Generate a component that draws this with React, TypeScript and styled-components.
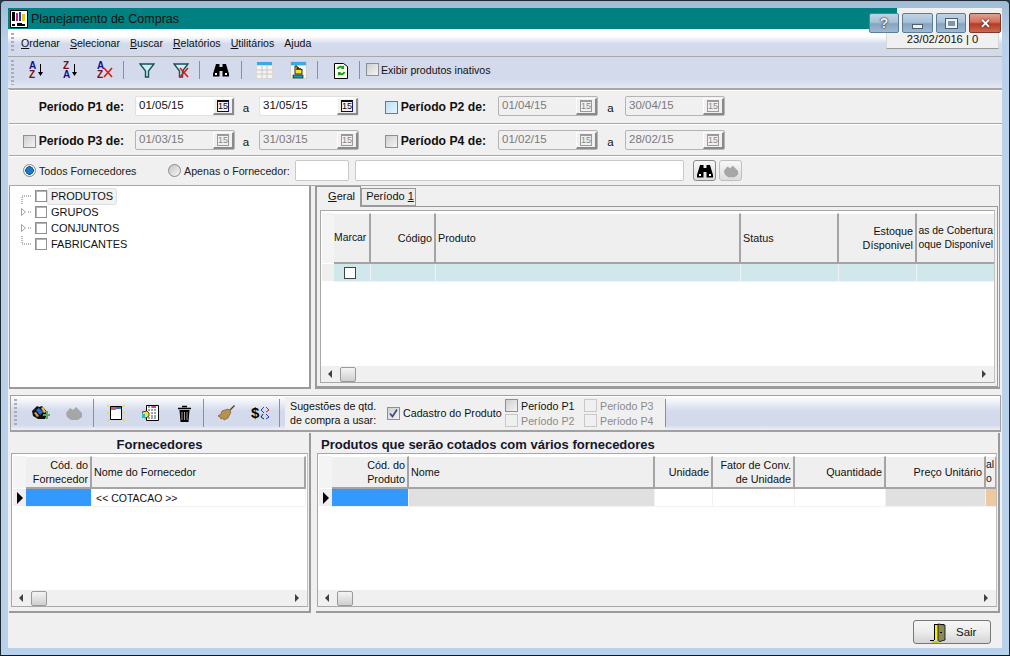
import React from 'react';
import styled, { createGlobalStyle } from 'styled-components';

const FONT = `"Liberation Sans", Arial, sans-serif`;

const GlobalStyle = createGlobalStyle`
  html, body { margin: 0; padding: 0; background: #2b3a44; }
  #root { width: 1010px; height: 656px; overflow: hidden; }
  * { box-sizing: border-box; }
`;

const Win = styled.div`
  position: relative;
  width: 1010px;
  height: 656px;
  padding: 8px 8px 8px 8px;
  background: linear-gradient(#9fbcd4 0, #b9d1ea 40px);
  border: 1px solid #1d2a33;
  border-bottom: 1px solid #0a1a20;
  border-radius: 5px 5px 0 0;
  font-family: ${FONT};
  font-size: 11px;
  color: #111;
  display: flex;
  flex-direction: column;
  margin: 0;
`;

const Inner = styled.div`
  margin: -1px;
  flex: 1;
  display: flex;
  flex-direction: column;
  background: #f0f0f0;
`;

const TitleBar = styled.div`
  height: 21px;
  background: #008080;
  display: flex;
  align-items: center;
  gap: 3px;
  padding-left: 2px;
  margin-right: 105px;
  color: #111;
  flex: none;
`;

const TitleText = styled.span`
  font-size: 12.5px;
`;

const Caption = styled.div`
  position: absolute;
  top: 12px;
  right: 8px;
  display: flex;
  gap: 3px;
`;

const CapBtn = styled.div<{ $red?: boolean; $w: number }>`
  width: ${(p) => p.$w}px;
  height: 20px;
  border: 1px solid ${(p) => (p.$red ? '#7a3a30' : '#5d7d96')};
  border-radius: 2px;
  background: ${(p) =>
    p.$red
      ? 'linear-gradient(#e0a090 0, #d2705c 45%, #b83a22 55%, #c86a50 100%)'
      : 'linear-gradient(#bfd3e4 0, #a8c2d8 45%, #84a4bf 55%, #9dbad2 100%)'};
  display: flex;
  align-items: center;
  justify-content: center;
`;

const CapHelp = styled.span`
  font-size: 14px;
  font-weight: bold;
  color: #e8eef4;
  text-shadow: 0 0 1px #223, 0 0 2px #223;
`;

const CapMin = styled.i`
  width: 11px;
  height: 5px;
  margin-top: 7px;
  background: #eef3f8;
  border: 1px solid #4a5f72;
`;

const CapMax = styled.i`
  width: 11px;
  height: 9px;
  border: 2px solid #eef3f8;
  background: #7f97ab;
  outline: 1px solid #4a5f72;
`;

const CapClose = styled.span`
  font-size: 13px;
  font-weight: bold;
  color: #fff;
  text-shadow: 0 0 1px #401010, 0 0 2px #401010;
`;

const MenuBar = styled.div`
  position: relative;
  height: 27px;
  flex: none;
  margin-top: 1px;
  background: linear-gradient(#ffffff 0, #ffffff 6px, #d3daec 14px, #d3daec 100%);
  border-bottom: 1px solid #a8a8a8;
  display: flex;
  align-items: center;
  padding-left: 13px;
  gap: 10px;
`;

const MenuItem = styled.span`
  font-size: 10.6px;
  u { text-decoration: underline; }
`;

const Grip = styled.i`
  position: absolute;
  left: 3px;
  top: 3px;
  bottom: 3px;
  width: 3px;
  background: repeating-linear-gradient(#a9adb8 0 2px, transparent 2px 4px);
`;

const DateBox = styled.div`
  position: absolute;
  right: 3px;
  top: 0;
  width: 113px;
  height: 19px;
  background: #f0f0f0;
  border: 1px solid #d8d8d8;
  border-bottom: 1px solid #9a9a9a;
  border-top: 0;
  font-size: 11.2px;
  display: flex;
  align-items: center;
  justify-content: center;
`;

const ToolBar = styled.div`
  position: relative;
  height: 32px;
  flex: none;
  background: linear-gradient(#d3daec 0, #d3daec 70%, #e4e8f3 100%);
  border-bottom: 1px solid #a8a8a8;
  display: flex;
  align-items: center;
  padding: 0 0 6px 12px;
`;

const ToolIcon = styled.span`
  width: 34px;
  height: 20px;
  flex: none;
  display: flex;
  align-items: center;
  justify-content: center;
`;

const Sep = styled.span<{ $l?: number; $r?: number; $h?: number }>`
  width: 1px;
  height: ${(p) => p.$h ?? 18}px;
  flex: none;
  background: #8c8f98;
  margin-left: ${(p) => p.$l ?? 0}px;
  margin-right: ${(p) => p.$r ?? 0}px;
`;

const Check = styled.span<{ $state?: 'off' | 'hover' | 'flat' | 'disabled' | 'plain'; $size?: number }>`
  width: ${(p) => p.$size ?? 13}px;
  height: ${(p) => p.$size ?? 13}px;
  flex: none;
  display: inline-flex;
  align-items: center;
  justify-content: center;
  border: 1px solid ${(p) => (p.$state === 'hover' ? '#3d87b8' : p.$state === 'disabled' ? '#c8c8c8' : p.$state === 'plain' ? '#444' : '#8e8f8f')};
  background: ${(p) =>
    p.$state === 'hover'
      ? 'linear-gradient(135deg,#bfe0f7,#e4f4fd)'
      : p.$state === 'disabled'
        ? '#f0f0f0'
        : p.$state === 'plain' || p.$state === 'flat'
          ? '#fff'
          : 'linear-gradient(135deg,#cfcfcf,#f4f4f4)'};
  box-shadow: ${(p) => (p.$state === 'flat' ? 'inset 1px 1px 0 #b4b4b4' : 'none')};
  color: #3b4f8c;
`;

const InactiveLabel = styled.span`
  font-size: 10.6px;
  margin-left: 2px;
`;

const PeriodRow = styled.div<{ $h: number }>`
  height: ${(p) => p.$h}px;
  flex: none;
  display: flex;
  align-items: center;
  border-top: 1px solid #a8a8a8;
  box-shadow: inset 0 1px 0 #fff;
  background: #f0f0f0;
  margin-left: 1px;
  padding: ${(p) => (p.$h > 32 ? '0 0 1px' : '1px 0 0')};
`;

const PeriodLabel = styled.div<{ $w: number; $r: number }>`
  width: ${(p) => p.$w}px;
  flex: none;
  display: flex;
  align-items: center;
  justify-content: flex-end;
  gap: 3px;
  padding-right: ${(p) => p.$r}px;
  font-weight: bold;
  font-size: 12.2px;
  padding-top: 2px;
  white-space: nowrap;
`;

const DateInput = styled.div<{ $active?: boolean }>`
  width: 100px;
  height: 20px;
  flex: none;
  background: ${(p) => (p.$active ? '#fff' : '#f0f0f0')};
  border: 1px solid ${(p) => (p.$active ? '#e0e0e0' : '#b4b4b4')};
  border-radius: 2px;
  display: flex;
  align-items: center;
  justify-content: space-between;
  padding: 0 0 2px 3px;
  font-size: 11.5px;
  color: ${(p) => (p.$active ? '#111' : '#7a7a7a')};
`;

const CalBtn = styled.span<{ $active?: boolean }>`
  width: 21px;
  height: 17px;
  margin-top: 2px;
  background: #f0f0f0;
  border-right: 2px solid #8a8a8a;
  border-bottom: 2px solid #8a8a8a;
  border-top: 1px solid #fff;
  border-left: 1px solid #fff;
  display: flex;
  align-items: center;
  justify-content: center;
  i {
    font-style: normal;
    font-size: 9px;
    line-height: 9px;
    width: 12px;
    text-align: center;
    border: 1px solid ${(p) => (p.$active ? '#101010' : '#9a9a9a')};
    border-top-width: 2px;
    border-right-color: ${(p) => (p.$active ? '#1a1a90' : '#9a9a9a')};
    color: ${(p) => (p.$active ? '#111' : '#888')};
  }
`;

const ASep = styled.span<{ $w: number }>`
  width: ${(p) => p.$w}px;
  flex: none;
  text-align: center;
  font-size: 11.5px;
  padding: 3px 2px 0 0;
`;

const SupplierRow = styled.div`
  height: 30px;
  flex: none;
  display: flex;
  align-items: center;
  border-top: 1px solid #a8a8a8;
  box-shadow: inset 0 1px 0 #fff;
  margin-left: 1px;
  padding-left: 14px;
  font-size: 10.7px;
  color: #222;
`;

const Radio = styled.span<{ $on?: boolean }>`
  width: 13px;
  height: 13px;
  flex: none;
  border-radius: 50%;
  border: 1px solid #8a8a8a;
  background: ${(p) =>
    p.$on
      ? 'radial-gradient(circle, #1a7ac8 0 3px, #0c4d88 4px, #f4f4f4 4.5px)'
      : 'linear-gradient(135deg,#c4c4c4,#f6f6f6)'};
  margin-right: 3px;
`;

const RadioLabel = styled.span<{ $w: number }>`
  width: ${(p) => p.$w}px;
  flex: none;
  white-space: nowrap;
`;

const PlainInput = styled.div<{ $w: number }>`
  width: ${(p) => p.$w}px;
  height: 21px;
  flex: none;
  background: #fff;
  border: 1px solid #c8c8c8;
  border-radius: 2px;
  margin-right: 6px;
`;

const SmallBtn = styled.span<{ $disabled?: boolean; $first?: boolean }>`
  width: 23px;
  height: 21px;
  flex: none;
  border: 1px solid ${(p) => (p.$disabled ? '#c0c0c0' : '#8a8a8a')};
  border-radius: 3px;
  background: linear-gradient(#f8f8f8, #dcdcdc);
  display: flex;
  align-items: center;
  justify-content: center;
  margin-left: ${(p) => (p.$first ? 3 : 0)}px;
  margin-right: 3px;
`;

const MainRow = styled.div`
  height: 204px;
  flex: none;
  display: flex;
  gap: 4px;
  margin-left: 1px;
  margin-right: 2px;
  border-top: 1px solid #a8a8a8;
`;

const TreePane = styled.div`
  width: 302px;
  flex: none;
  background: #fff;
  border-left: 1px solid #9a9a9a;
  border-right: 2px solid #9a9a9a;
  border-bottom: 2px solid #9a9a9a;
  padding-top: 2px;
`;

const TreeRow = styled.div`
  height: 16px;
  display: flex;
  align-items: center;
  padding-left: 11px;
`;

const TreeLine = styled.span`
  width: 14px;
  height: 16px;
  flex: none;
  display: flex;
  align-items: center;
`;

const TreeText = styled.span<{ $sel?: boolean }>`
  margin-left: ${(p) => (p.$sel ? 0 : 4)}px;
  padding: ${(p) => (p.$sel ? '1px 3px' : '0 0')};
  font-size: 11px;
  background: ${(p) => (p.$sel ? '#f2f2f2' : 'transparent')};
  border: ${(p) => (p.$sel ? '1px solid #dedede' : '0')};
  border-radius: 3px;
  line-height: 13px;
`;

const TabsPane = styled.div`
  flex: 1;
  display: flex;
  flex-direction: column;
  border-left: 1px solid #9a9a9a;
  border-right: 1px solid #9a9a9a;
  border-bottom: 2px solid #9a9a9a;
  min-width: 0;
`;

const TabStrip = styled.div`
  height: 20px;
  flex: none;
  display: flex;
  align-items: flex-end;
`;

const Tab = styled.div<{ $active?: boolean }>`
  height: ${(p) => (p.$active ? 21 : 18)}px;
  width: ${(p) => (p.$active ? 45 : 55)}px;
  flex: none;
  font-size: 11px;
  white-space: nowrap;
  display: flex;
  align-items: center;
  justify-content: ${(p) => (p.$active ? 'flex-end' : 'center')};
  background: ${(p) => (p.$active ? '#f0f0f0' : '#ececec')};
  border: 1px solid #9a9a9a;
  border-bottom: ${(p) => (p.$active ? '0' : '1px solid #9a9a9a')};
  position: relative;
  top: ${(p) => (p.$active ? 1 : 0)}px;
  z-index: ${(p) => (p.$active ? 1 : 0)};
  padding: ${(p) => (p.$active ? '0 5px 2px 0' : '0 0 2px 3px')};
`;

const TabPage = styled.div`
  flex: 1;
  display: flex;
  border: 1px solid #9a9a9a;
  margin-right: 1px;
  padding: 3px 2px 3px 3px;
  min-height: 0;
`;

const GridBox = styled.div`
  flex: 1;
  min-width: 0;
  background: #fff;
  border: 1px solid #a8a8a8;
  border-right-color: #c0c0c0;
  display: flex;
  flex-direction: column;
  overflow: hidden;
  padding: 2px 0 0 1px;
`;

const GridRow = styled.div<{ $h: number }>`
  height: ${(p) => p.$h}px;
  flex: none;
  display: flex;
`;

const Head = styled.div<{ $w: number; $align?: string; $tight?: boolean }>`
  width: ${(p) => p.$w}px;
  flex: none;
  background: #efefef;
  border-right: 2px solid #a4a4a4;
  border-bottom: 2px solid #a4a4a4;
  border-top: 1px solid #fff;
  display: flex;
  align-items: center;
  justify-content: ${(p) => (p.$align === 'right' ? 'flex-end' : 'flex-start')};
  text-align: ${(p) => p.$align ?? 'left'};
  padding: ${(p) => (p.$tight ? '0 1px 0 0' : '0 2px')};
  font-size: ${(p) => (p.$tight ? 10.4 : 10.8)}px;
  line-height: 14px;
  white-space: pre;
  overflow: hidden;
`;

const Cell = styled.div<{ $w: number; $bg: string }>`
  width: ${(p) => p.$w}px;
  flex: none;
  background: ${(p) => p.$bg};
  border-right: 1px solid #f2f2f2;
  border-bottom: 1px solid #f2f2f2;
  display: flex;
  align-items: center;
  padding-left: 4px;
  font-size: 10.5px;
`;

const Indicator = styled.div<{ $w: number; $head?: boolean }>`
  width: ${(p) => p.$w}px;
  flex: none;
  background: ${(p) => (p.$head ? '#f4f4f4' : '#efefef')};
  border-bottom: 1px solid #fff;
  display: flex;
  align-items: center;
  justify-content: center;
`;

const Pointer = styled.span`
  width: 0;
  height: 0;
  border-left: 6px solid #000;
  border-top: 6px solid transparent;
  border-bottom: 6px solid transparent;
`;

const MarkBox = styled.span`
  margin-left: 6px;
  display: flex;
`;

const Filler = styled.div`
  flex: 1;
`;

const Scroll = styled.div`
  height: 16px;
  flex: none;
  background: #f0f0f0;
  display: flex;
  align-items: center;
  margin-left: -1px;
`;

const ScrollArrow = styled.span<{ $dir: 'l' | 'r' }>`
  width: 0;
  height: 0;
  flex: none;
  border-top: 4px solid transparent;
  border-bottom: 4px solid transparent;
  ${(p) => (p.$dir === 'l' ? 'border-right: 4px solid #404040; margin-left: 7px;' : 'border-left: 4px solid #404040; margin-right: 8px;')}
`;

const Thumb = styled.span`
  width: 16px;
  height: 15px;
  flex: none;
  margin-left: 8px;
  border: 1px solid #9a9a9a;
  border-radius: 2px;
  background: linear-gradient(#f4f4f4, #cfcfcf);
`;

const ActionBar = styled.div`
  height: 37px;
  flex: none;
  margin: 6px 1px 1px 2px;
  border: 1px solid #a0a0a0;
  border-bottom-width: 2px;
  background: linear-gradient(#ffffff 0, #d3daec 45%, #d3daec 85%, #eef0f7 100%);
  display: flex;
  align-items: center;
  padding-left: 12px;
  position: relative;
`;

const SuggestBox = styled.div`
  height: 32px;
  width: 380px;
  flex: none;
  background: #f0f0f0;
  display: flex;
  align-items: center;
  margin-left: 5px;
  font-size: 10.7px;
`;

const SuggestText = styled.span`
  width: 102px;
  flex: none;
  padding-left: 5px;
  line-height: 14px;
  white-space: nowrap;
`;

const CheckLine = styled.label<{ $muted?: boolean; $w?: number }>`
  display: flex;
  align-items: center;
  gap: 3px;
  width: ${(p) => (p.$w ? `${p.$w}px` : 'auto')};
  flex: none;
  height: 15px;
  white-space: nowrap;
  color: ${(p) => (p.$muted ? '#8a8a8a' : '#111')};
`;

const CheckColumn = styled.div<{ $w: number }>`
  width: ${(p) => p.$w}px;
  flex: none;
  display: flex;
  flex-direction: column;
`;

const BottomRow = styled.div`
  height: 180px;
  flex: none;
  display: flex;
  gap: 5px;
  margin-left: 1px;
  margin-right: 2px;
`;

const QuotePane = styled.div<{ $w?: number }>`
  width: ${(p) => (p.$w ? `${p.$w}px` : 'auto')};
  flex: ${(p) => (p.$w ? 'none' : '1')};
  min-width: 0;
  display: flex;
  flex-direction: column;
  border-right: 2px solid #9a9a9a;
  border-bottom: 2px solid #9a9a9a;
  padding: 0 1px 4px ${(p) => (p.$w ? 2 : 1)}px;
`;

const QuoteTitle = styled.div<{ $center?: boolean }>`
  height: 20px;
  flex: none;
  font-weight: bold;
  font-size: 13px;
  color: #15152e;
  text-align: ${(p) => (p.$center ? 'center' : 'left')};
  padding-left: ${(p) => (p.$center ? 0 : 4)}px;
  line-height: 23px;
`;

const Footer = styled.div`
  flex: 1;
  display: flex;
  align-items: flex-start;
  justify-content: flex-end;
  padding: 7px 11px 0 0;
`;

const ExitButton = styled.button`
  width: 78px;
  height: 24px;
  border: 1px solid #777;
  border-radius: 3px;
  background: linear-gradient(#f6f6f6 0, #ececec 50%, #d4d4d4 100%);
  display: flex;
  align-items: center;
  gap: 9px;
  padding: 0 0 0 16px;
  font-family: ${FONT};
  font-size: 11.5px;
  color: #111;
`;

/* drawings */

const AppLogo = () => (
  <svg width="18" height="18" viewBox="0 0 18 18">
    <rect x="0.5" y="0.5" width="17" height="17" fill="#fff" stroke="#000" />
    <rect x="2" y="2" width="3" height="9" fill="#000" />
    <rect x="6" y="3" width="2" height="8" fill="#c02090" />
    <rect x="9" y="2" width="2" height="9" fill="#2030c0" />
    <rect x="12" y="4" width="3" height="7" fill="#e8c820" />
    <path d="M2 14h3v2H2zM7 13h5v1h3v2H7z" fill="#000" />
  </svg>
);

const LetterIcon = ({ top, bottom }: { top: string; bottom: string }) => (
  <svg width="16" height="18" viewBox="0 0 16 18">
    <text x="0" y="8" fontFamily="Liberation Sans" fontWeight="bold" fontSize="10" fill={top === 'A' ? '#101090' : '#7a1010'}>{top}</text>
    <text x="0" y="17" fontFamily="Liberation Sans" fontWeight="bold" fontSize="10" fill={bottom === 'A' ? '#101090' : '#7a1010'}>{bottom}</text>
    <path d="M11.5 3v9" stroke="#000" strokeWidth="1" />
    <path d="M9 11h5l-2.5 4z" fill="#000" />
  </svg>
);

const RedCross = () => <path d="M7 7l8 9M15 7l-8 9" stroke="#e01818" strokeWidth="1.6" fill="none" />;

const ClearSort = () => (
  <svg width="16" height="18" viewBox="0 0 16 18">
    <text x="0" y="8" fontFamily="Liberation Sans" fontWeight="bold" fontSize="10" fill="#101090">A</text>
    <text x="0" y="17" fontFamily="Liberation Sans" fontWeight="bold" fontSize="10" fill="#7a1010">Z</text>
    <RedCross />
  </svg>
);

const Funnel = ({ cross }: { cross?: boolean }) => (
  <svg width="16" height="18" viewBox="0 0 16 18">
    <path d="M1 3h14L9.5 10v6h-3v-6z" fill="#cfeef0" stroke="#17505a" strokeWidth="1.4" />
    {cross && <RedCross />}
  </svg>
);

const Binoculars = ({ size = 16 }: { size?: number }) => (
  <svg width={size} height={size} viewBox="0 0 16 16">
    <path d="M3 2h3.5v3h3V2H13l3 10v2.5H9.5V9h-3v5.5H0V12z" fill="#000" />
    <path d="M2 11h2v2H2zM12 11h2v2h-2z" fill="#fff" />
  </svg>
);

const GrayBlob = ({ size = 18 }: { size?: number }) => (
  <svg width={size} height={size} viewBox="0 0 18 18">
    <path d="M1 9l4-5 3 2 3-3 6 6v4l-4 3H6l-4-3z" fill="#a6a6a6" />
  </svg>
);

const TableIcon = () => (
  <svg width="17" height="18" viewBox="0 0 17 18">
    <rect x="0" y="0" width="17" height="18" fill="#d8d8d8" />
    <rect x="1" y="1" width="15" height="3" fill="#3da8e8" />
    <path d="M1 5h15v12H1z" fill="#f4f4f4" />
    <path d="M1 9h15M1 13h15M6 5v12M11 5v12" stroke="#c8c8c8" />
  </svg>
);

const TableHandIcon = () => (
  <svg width="17" height="18" viewBox="0 0 17 18">
    <rect x="0" y="0" width="17" height="18" fill="#d0d0d0" />
    <rect x="1" y="1" width="15" height="3" fill="#3da8e8" />
    <path d="M1 5h15v12H1z" fill="#f4f4f4" />
    <path d="M5 13V5h2v4l1-3 1 3 1-2 1 2 1-1v5z" fill="#f8e020" stroke="#000" strokeWidth="0.8" />
    <rect x="3" y="14" width="10" height="3" fill="#10a8b0" stroke="#000" strokeWidth="0.6" />
  </svg>
);

const RefreshIcon = () => (
  <svg width="14" height="18" viewBox="0 0 14 18">
    <path d="M0.5 2.5h9l4 3v12H.5z" fill="#fffff0" stroke="#000" />
    <path d="M3.5 8a3.5 3.5 0 0 1 6-1M10.5 11a3.5 3.5 0 0 1-6 1" stroke="#18a018" strokeWidth="2" fill="none" />
    <path d="M10 4v4H7zM4 15v-4h3z" fill="#18a018" />
  </svg>
);

const HandPlus = () => (
  <svg width="19" height="18" viewBox="0 0 19 18">
    <path d="M1 7l5-5 2 1 3-1 6 7-3 6H7L2 12z" fill="#101010" />
    <path d="M5 6l3-2 4 4-3 3z" fill="#2a6ad0" />
    <path d="M3 9l2-1 3 4-2 1z" fill="#e8a020" />
    <path d="M10 4l2-1 3 5-2 1z" fill="#e8c040" />
    <path d="M12 10h3v-3h2v3h2v2h-2v3h-2v-3h-3z" fill="#58a868" />
  </svg>
);

const NewDoc = () => (
  <svg width="18" height="18" viewBox="0 0 18 18">
    <path d="M0 1l3 2M18 1l-3 2M0 17l3-2M18 17l-3-2M0 9h2M16 9h2" stroke="#f0e020" strokeWidth="1.4" />
    <path d="M3.5 2.5h11v13h-11z" fill="#fff" stroke="#000" />
    <path d="M4 3h5v3H4z" fill="#d05878" />
    <path d="M9 3h5v2H9z" fill="#3070c0" />
  </svg>
);

const EditDoc = () => (
  <svg width="17" height="18" viewBox="0 0 17 18">
    <path d="M4.5 1.5h12v15h-12z" fill="#fff" stroke="#000" />
    <path d="M6 3h9M6 6h9M9 9h6M9 12h6M6 14h9" stroke="#444" strokeDasharray="2 1" />
    <path d="M10 2h4v2h-4z" fill="#c05080" />
    <path d="M0 8l5-1 2 2v3l-3 2-4-1z" fill="#f8e040" stroke="#000" strokeWidth="0.7" />
    <path d="M0 10h3v4H0z" fill="#18c0d0" />
  </svg>
);

const TrashIcon = () => (
  <svg width="13" height="17" viewBox="0 0 13 17">
    <path d="M4 1.5h5M0 3.5h13" stroke="#000" strokeWidth="1.6" />
    <path d="M1.5 5h10l-1 12h-8z" fill="#000" />
    <path d="M4 7v8M6.5 7v8M9 7v8" stroke="#9a9a9a" />
  </svg>
);

const BroomIcon = () => (
  <svg width="17" height="16" viewBox="0 0 17 16">
    <path d="M11 5l5-5 1 1-5 5z" fill="#5a4020" />
    <path d="M10 4l3 3-3 6-4 2-1-2-2 1-1-2-2-1 3-2 1-3z" fill="#b89050" stroke="#7a5a28" strokeWidth="0.7" />
  </svg>
);

const DollarArrows = () => (
  <svg width="18" height="16" viewBox="0 0 18 16">
    <text x="0" y="13" fontFamily="Liberation Sans" fontWeight="bold" fontSize="15" fill="#000">$</text>
    <path d="M13 2l-3 3 3 3" stroke="#2040c0" fill="none" />
    <path d="M15 2l3 3-3 2" stroke="#d02020" fill="none" />
    <path d="M12 9l-2 3 3 2" stroke="#202020" fill="none" />
    <path d="M15 9l3 3-3 2" stroke="#2040c0" fill="none" />
  </svg>
);

const DoorIcon = () => (
  <svg width="17" height="21" viewBox="0 0 17 21">
    <path d="M4 2h10v16h-1V3H5v15H4z" fill="#000" />
    <path d="M5 3h3v14H5z" fill="#f8f000" />
    <path d="M8 2l7 1v15l-7 2z" fill="#8a8a58" stroke="#000" strokeWidth="0.8" />
    <path d="M10 10h2v1h-2z" fill="#000" />
    <path d="M0 18h4v1H0z" fill="#000" />
    <path d="M2 19h7v2H2z" fill="#c8c840" />
  </svg>
);

const CheckMark = () => (
  <svg width="11" height="11" viewBox="0 0 11 11">
    <path d="M2 5.5l2.5 3L9 1.5" stroke="#3b4f8c" strokeWidth="1.8" fill="none" />
  </svg>
);

const TreeConnector = ({ kind }: { kind: 'first' | 'last' | 'closed' }) => (
  <TreeLine>
    <svg width="14" height="16" viewBox="0 0 14 16">
      {kind === 'first' && <path d="M1 16V8h10" stroke="#777" strokeDasharray="1 1" fill="none" />}
      {kind === 'last' && <path d="M1 0v8h10" stroke="#777" strokeDasharray="1 1" fill="none" />}
      {kind === 'closed' && (
        <>
          <path d="M0.5 4.5l4 3.5-4 3.5z" fill="#fff" stroke="#a0a0a0" />
          <path d="M7 8h4" stroke="#777" strokeDasharray="1 1" />
        </>
      )}
    </svg>
  </TreeLine>
);

/* reusable parts */

interface Col {
  label?: string;
  w: number;
  align?: 'left' | 'right';
  bg?: string;
  text?: string;
  tight?: boolean;
}

const DateField = ({ value, active }: { value: string; active?: boolean }) => (
  <DateInput $active={active}>
    <span>{value}</span>
    <CalBtn $active={active}>
      <i>15</i>
    </CalBtn>
  </DateInput>
);

const DataGrid = ({ cols, indW, headH, rowH, rowBg, pointer, checkFirst }: {
  cols: Col[];
  indW: number;
  headH: number;
  rowH: number;
  rowBg?: string;
  pointer?: boolean;
  checkFirst?: boolean;
}) => (
  <GridBox>
    <GridRow $h={headH}>
      <Indicator $w={indW} $head />
      {cols.map((c, i) => (
        <Head key={i} $w={c.w} $align={c.align} $tight={c.tight}>{c.label}</Head>
      ))}
    </GridRow>
    <GridRow $h={rowH}>
      <Indicator $w={indW}>{pointer && <Pointer />}</Indicator>
      {cols.map((c, i) => (
        <Cell key={i} $w={c.w} $bg={c.bg ?? rowBg ?? '#fff'}>
          {checkFirst && i === 0 && (
            <MarkBox><Check $state="plain" $size={12} /></MarkBox>
          )}
          {c.text}
        </Cell>
      ))}
    </GridRow>
    <Filler />
    <Scroll>
      <ScrollArrow $dir="l" />
      <Thumb />
      <Filler />
      <ScrollArrow $dir="r" />
    </Scroll>
  </GridBox>
);

const topCols: Col[] = [
  { label: 'Marcar', w: 37, tight: true },
  { label: 'Código', w: 65, align: 'right' },
  { label: 'Produto', w: 305 },
  { label: 'Status', w: 98 },
  { label: 'Estoque\nDísponivel', w: 78, align: 'right' },
  { label: 'as de Cobertura\noque Disponível', w: 79, align: 'right', tight: true },
];

const supplierCols: Col[] = [
  { label: 'Cód. do\nFornecedor', w: 66, align: 'right', bg: '#3399ff' },
  { label: 'Nome do Fornecedor', w: 214, text: '<< COTACAO >>' },
];

const productCols: Col[] = [
  { label: 'Cód. do\nProduto', w: 77, align: 'right', bg: '#3399ff' },
  { label: 'Nome', w: 246, bg: '#e0e0e0' },
  { label: 'Unidade', w: 58, align: 'right' },
  { label: 'Fator de Conv.\nde Unidade', w: 82, align: 'right' },
  { label: 'Quantidade', w: 91, align: 'right' },
  { label: 'Preço Unitário', w: 100, align: 'right', bg: '#e0e0e0' },
  { label: 'al\no', w: 11, bg: '#f0c8a0', tight: true },
];

export default function App() {
  return (
    <>
      <GlobalStyle />
      <Win>
        <Inner>
          <TitleBar>
            <AppLogo />
            <TitleText>Planejamento de Compras</TitleText>
          </TitleBar>
          <MenuBar>
            <Grip />
            <MenuItem><u>O</u>rdenar</MenuItem>
            <MenuItem><u>S</u>elecionar</MenuItem>
            <MenuItem><u>B</u>uscar</MenuItem>
            <MenuItem><u>R</u>elatórios</MenuItem>
            <MenuItem><u>U</u>tilitários</MenuItem>
            <MenuItem>Ajuda</MenuItem>
            <DateBox>23/02/2016 | 0</DateBox>
          </MenuBar>
          <ToolBar>
            <Grip />
            <ToolIcon><LetterIcon top="A" bottom="Z" /></ToolIcon>
            <ToolIcon><LetterIcon top="Z" bottom="A" /></ToolIcon>
            <ToolIcon><ClearSort /></ToolIcon>
            <Sep $l={1} $r={6} />
            <ToolIcon><Funnel /></ToolIcon>
            <ToolIcon><Funnel cross /></ToolIcon>
            <Sep $l={1} $r={4} />
            <ToolIcon><Binoculars /></ToolIcon>
            <Sep $l={3} $r={5} />
            <ToolIcon><TableIcon /></ToolIcon>
            <ToolIcon><TableHandIcon /></ToolIcon>
            <Sep $l={2} $r={6} />
            <ToolIcon><RefreshIcon /></ToolIcon>
            <Sep $l={1} $r={6} />
            <Check />
            <InactiveLabel>Exibir produtos inativos</InactiveLabel>
          </ToolBar>
          <PeriodRow $h={34}>
            <PeriodLabel $w={126} $r={11}>Período P1 de:</PeriodLabel>
            <DateField value="01/05/15" active />
            <ASep $w={24}>a</ASep>
            <DateField value="31/05/15" active />
            <PeriodLabel $w={139} $r={12}><Check $state="hover" />Período P2 de:</PeriodLabel>
            <DateField value="01/04/15" />
            <ASep $w={27}>a</ASep>
            <DateField value="30/04/15" />
          </PeriodRow>
          <PeriodRow $h={32}>
            <PeriodLabel $w={126} $r={11}><Check />Período P3 de:</PeriodLabel>
            <DateField value="01/03/15" />
            <ASep $w={24}>a</ASep>
            <DateField value="31/03/15" />
            <PeriodLabel $w={139} $r={12}><Check />Período P4 de:</PeriodLabel>
            <DateField value="01/02/15" />
            <ASep $w={27}>a</ASep>
            <DateField value="28/02/15" />
          </PeriodRow>
          <SupplierRow>
            <Radio $on />
            <RadioLabel $w={129}>Todos Fornecedores</RadioLabel>
            <Radio />
            <RadioLabel $w={111}>Apenas o Fornecedor:</RadioLabel>
            <PlainInput $w={54} />
            <PlainInput $w={329} />
            <SmallBtn $first><Binoculars /></SmallBtn>
            <SmallBtn $disabled><GrayBlob size={16} /></SmallBtn>
          </SupplierRow>
          <MainRow>
            <TreePane>
              <TreeRow>
                <TreeConnector kind="first" />
                <Check $state="flat" $size={12} />
                <TreeText $sel>PRODUTOS</TreeText>
              </TreeRow>
              <TreeRow>
                <TreeConnector kind="closed" />
                <Check $state="flat" $size={12} />
                <TreeText>GRUPOS</TreeText>
              </TreeRow>
              <TreeRow>
                <TreeConnector kind="closed" />
                <Check $state="flat" $size={12} />
                <TreeText>CONJUNTOS</TreeText>
              </TreeRow>
              <TreeRow>
                <TreeConnector kind="last" />
                <Check $state="flat" $size={12} />
                <TreeText>FABRICANTES</TreeText>
              </TreeRow>
            </TreePane>
            <TabsPane>
              <TabStrip>
                <Tab $active><span><u>G</u>eral</span></Tab>
                <Tab><span>Período <u>1</u></span></Tab>
              </TabStrip>
              <TabPage>
                <DataGrid cols={topCols} indW={12} headH={51} rowH={18} rowBg="#d0e8ec" checkFirst />
              </TabPage>
            </TabsPane>
          </MainRow>
          <ActionBar>
            <Grip />
            <ToolIcon><HandPlus /></ToolIcon>
            <ToolIcon><GrayBlob /></ToolIcon>
            <Sep $l={2} $r={5} $h={28} />
            <ToolIcon><NewDoc /></ToolIcon>
            <ToolIcon><EditDoc /></ToolIcon>
            <ToolIcon><TrashIcon /></ToolIcon>
            <Sep $l={2} $r={5} $h={28} />
            <ToolIcon><BroomIcon /></ToolIcon>
            <ToolIcon><DollarArrows /></ToolIcon>
            <Sep $l={2} $h={28} />
            <SuggestBox>
              <SuggestText>Sugestões de qtd.<br />de compra a usar:</SuggestText>
              <CheckLine $w={118}>
                <Check><CheckMark /></Check>
                Cadastro do Produto
              </CheckLine>
              <CheckColumn $w={79}>
                <CheckLine><Check />Período P1</CheckLine>
                <CheckLine $muted><Check $state="disabled" />Período P2</CheckLine>
              </CheckColumn>
              <CheckColumn $w={70}>
                <CheckLine $muted><Check $state="disabled" />Período P3</CheckLine>
                <CheckLine $muted><Check $state="disabled" />Período P4</CheckLine>
              </CheckColumn>
            </SuggestBox>
            <Sep $h={28} />
          </ActionBar>
          <BottomRow>
            <QuotePane $w={302}>
              <QuoteTitle $center>Fornecedores</QuoteTitle>
              <DataGrid cols={supplierCols} indW={13} headH={33} rowH={18} pointer />
            </QuotePane>
            <QuotePane>
              <QuoteTitle>Produtos que serão cotados com vários fornecedores</QuoteTitle>
              <DataGrid cols={productCols} indW={13} headH={33} rowH={18} pointer />
            </QuotePane>
          </BottomRow>
          <Footer>
            <ExitButton>
              <DoorIcon />
              Sair
            </ExitButton>
          </Footer>
        </Inner>
        <Caption>
          <CapBtn $w={30}><CapHelp>?</CapHelp></CapBtn>
          <CapBtn $w={31}><CapMin /></CapBtn>
          <CapBtn $w={30}><CapMax /></CapBtn>
          <CapBtn $red $w={32}><CapClose>✕</CapClose></CapBtn>
        </Caption>
      </Win>
    </>
  );
}
